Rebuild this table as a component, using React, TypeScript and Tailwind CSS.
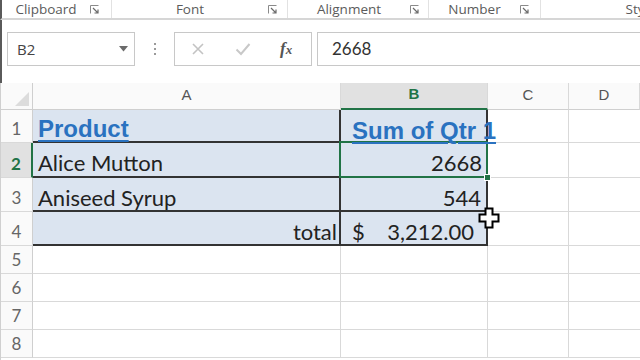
const Launcher = () => (
  <svg width="9" height="9" viewBox="0 0 9 9" className="shrink-0">
    <path d="M0.5 8.5V0.5H8.5" fill="none" stroke="#8a8a8a" />
    <path d="M3 3L8 8M8 4.5V8H4.5" fill="none" stroke="#6a6a6a" strokeWidth="1.2" />
  </svg>
);

const groups = [
  { label: "Clipboard", w: "w-[110px]", pr: "pr-[12px]" },
  { label: "Font", w: "w-[176px]", pr: "pr-[10px]" },
  { label: "Alignment", w: "w-[141px]", pr: "pr-[9px]" },
  { label: "Number", w: "w-[112px]", pr: "pr-[11px]" },
];

const Ribbon = () => (
  <div className="flex h-[20px] shrink-0 border-b-2 border-[#d6d6d6] border-l-2 border-l-[#5a5a5a] bg-white font-['Open_Sans',sans-serif] text-[13.5px] leading-[18px] text-[#5b5b5b]">
    {groups.map((g) => (
      <div key={g.label} className={`flex ${g.w} items-start border-r border-[#e2e2e2] ${g.pr}`}>
        <span className="flex-1 text-center">{g.label}</span>
        <div className="pt-[5px]">
          <Launcher />
        </div>
      </div>
    ))}
    <div className="flex flex-1 justify-end overflow-hidden">
      <span className="-mr-[22px]">Styles</span>
    </div>
  </div>
);

const FormulaBar = () => (
  <div className="flex h-[63px] shrink-0 items-start border-l-2 border-l-[#5a5a5a] bg-white pt-[12px] pl-[5px] font-['Open_Sans',sans-serif]">
    <div className="flex h-[34px] w-[128px] items-center justify-between border border-[#c8c8c8] pl-[9px] pr-[6px] text-[15px] text-[#444]">
      <span>B2</span>
      <svg width="9" height="6" viewBox="0 0 9 6">
        <path d="M0 0H9L4.5 5.5Z" fill="#6b6b6b" />
      </svg>
    </div>
    <div className="flex h-[34px] w-[39px] flex-col items-center justify-center gap-[3px]">
      <span className="h-[2px] w-[2px] bg-[#9a9a9a]" />
      <span className="h-[2px] w-[2px] bg-[#9a9a9a]" />
      <span className="h-[2px] w-[2px] bg-[#9a9a9a]" />
    </div>
    <div className="flex h-[34px] w-[138px] items-center border border-[#c8c8c8] pl-[16px]">
      <svg width="14" height="14" viewBox="0 0 14 14">
        <path d="M2 2L12 12M12 2L2 12" stroke="#c3c3c3" strokeWidth="1.6" />
      </svg>
      <svg width="16" height="14" viewBox="0 0 16 14" className="ml-[30px]">
        <path d="M1.5 7.5L6 12L14.5 2" fill="none" stroke="#c8c8c8" strokeWidth="2" />
      </svg>
      <span className="ml-[29px] font-['Liberation_Serif',serif] text-[17px] font-bold italic text-[#555]">
        f<span className="text-[13px]">x</span>
      </span>
    </div>
    <div className="ml-[5px] flex h-[34px] flex-1 items-center border border-r-0 border-[#c8c8c8] pl-[14px] font-['Lato',sans-serif] text-[17px] text-[#333]">
      2668
    </div>
  </div>
);

const line = "border-[#d9d9d9]";
const head = "font-['Liberation_Sans',sans-serif] text-[24px] font-bold leading-[24px] text-[#2a72c0] underline decoration-2 underline-offset-[3px] whitespace-nowrap";

const Hdr = ({ label, active }: { label: string; active?: boolean }) => (
  <div
    className={`flex items-end justify-center pb-[2px] border-r ${line} ${
      active
        ? "border-b-2 border-b-[#217346] bg-[#e1e1e1] font-bold text-[#217346]"
        : "border-b border-b-[#cfcfcf] bg-[#fafafa] text-[#555]"
    } font-['Liberation_Sans',sans-serif] text-[15px]`}
  >
    {label}
  </div>
);

const RowNum = ({ n, active }: { n: number; active?: boolean }) => (
  <div
    className={`flex items-end justify-center pb-[2px] border-b ${line} ${
      active
        ? "border-r-2 border-r-[#217346] bg-[#e1e1e1] font-bold text-[#217346]"
        : "border-r border-r-[#cfcfcf] bg-[#fafafa] text-[#666]"
    } font-['Lato',sans-serif] text-[17px] leading-[22px]`}
  >
    {n}
  </div>
);

const Cursor = () => (
  <svg width="22" height="22" viewBox="0 0 22 22" className="pointer-events-none absolute left-[477px] top-[124px] z-20">
    <path
      d="M7.5 1.5H14.5V7.5H20.5V14.5H14.5V20.5H7.5V14.5H1.5V7.5H7.5Z"
      fill="white"
      stroke="black"
      strokeWidth="2"
    />
  </svg>
);

const Grid = () => (
  <div className="relative grid flex-1 grid-cols-[32px_308px_147px_81px_1fr] grid-rows-[27px_33px_35px_34px_34px_28px_28px_28px_28px] overflow-hidden border-l border-l-[#d0d0d0] font-['Lato',sans-serif] text-[22px] leading-[24px] text-[#222]">
    {/* header row */}
    <div className="relative border-r border-b border-[#cfcfcf] bg-[#fafafa]">
      <svg width="14" height="14" viewBox="0 0 14 14" className="absolute bottom-[3px] right-[3px]">
        <path d="M14 0V14H0Z" fill="#dcdcdc" />
      </svg>
    </div>
    <Hdr label="A" />
    <Hdr label="B" active />
    <Hdr label="C" />
    <Hdr label="D" />

    {/* row 1 */}
    <RowNum n={1} />
    <div className="flex items-end border-r border-b-2 border-r-[#d9d9d9] border-b-[#333] bg-[#dbe4f0] pl-[5px]">
      <span className={head}>Product</span>
    </div>
    <div className="flex items-end border-r-2 border-l-2 border-r-[#333] border-l-[#333] bg-[#dbe4f0] pl-[11px] -ml-[2px]">
      <span className={`relative z-10 ${head}`}>Sum of Qtr 1</span>
    </div>
    <div className={`border-r border-b ${line}`} />
    <div className={`border-b ${line}`} />

    {/* row 2 */}
    <RowNum n={2} active />
    <div className="flex items-end border-b-2 border-b-[#333] bg-[#dbe4f0] pl-[5px] pb-[1px]">Alice Mutton</div>
    <div className="relative flex items-end justify-end border-l-2 border-r-2 border-b-2 border-[#333] bg-[#dbe4f0] pr-[4px] pb-[1px] -ml-[2px]">
      2668
      <div className="pointer-events-none absolute -inset-y-[2px] -left-[2px] -right-[2px] border-2 border-[#217346]" />
      <div className="absolute -bottom-[5px] -right-[5px] z-10 h-[7px] w-[7px] border border-white bg-[#217346]" />
    </div>
    <div className={`border-r border-b ${line}`} />
    <div className={`border-b ${line}`} />

    {/* row 3 */}
    <RowNum n={3} />
    <div className="flex items-end border-b-2 border-b-[#333] bg-[#dbe4f0] pl-[5px]">Aniseed Syrup</div>
    <div className="flex items-end justify-end border-l-2 border-r-2 border-b-2 border-[#333] bg-[#dbe4f0] pr-[5px] -ml-[2px]">544</div>
    <div className={`border-r border-b ${line}`} />
    <div className={`border-b ${line}`} />

    {/* row 4 */}
    <RowNum n={4} />
    <div className="flex items-end justify-end border-b-2 border-b-[#333] bg-[#dbe4f0] pr-[4px]">total</div>
    <div className="flex items-end justify-between border-l-2 border-r-2 border-b-2 border-[#333] bg-[#dbe4f0] pl-[11px] pr-[12px] -ml-[2px]">
      <span>$</span>
      <span>3,212.00</span>
    </div>
    <div className={`border-r border-b ${line}`} />
    <div className={`border-b ${line}`} />

    {/* empty rows */}
    {[5, 6, 7, 8].map((n) => (
      <div key={n} className="contents">
        <RowNum n={n} />
        <div className={`border-r border-b ${line}`} />
        <div className={`border-r border-b ${line}`} />
        <div className={`border-r border-b ${line}`} />
        <div className={`border-b ${line}`} />
      </div>
    ))}
    <Cursor />
  </div>
);

export default function App() {
  return (
    <div className="flex h-[360px] w-[640px] flex-col overflow-hidden bg-white">
      <Ribbon />
      <FormulaBar />
      <Grid />
    </div>
  );
}
